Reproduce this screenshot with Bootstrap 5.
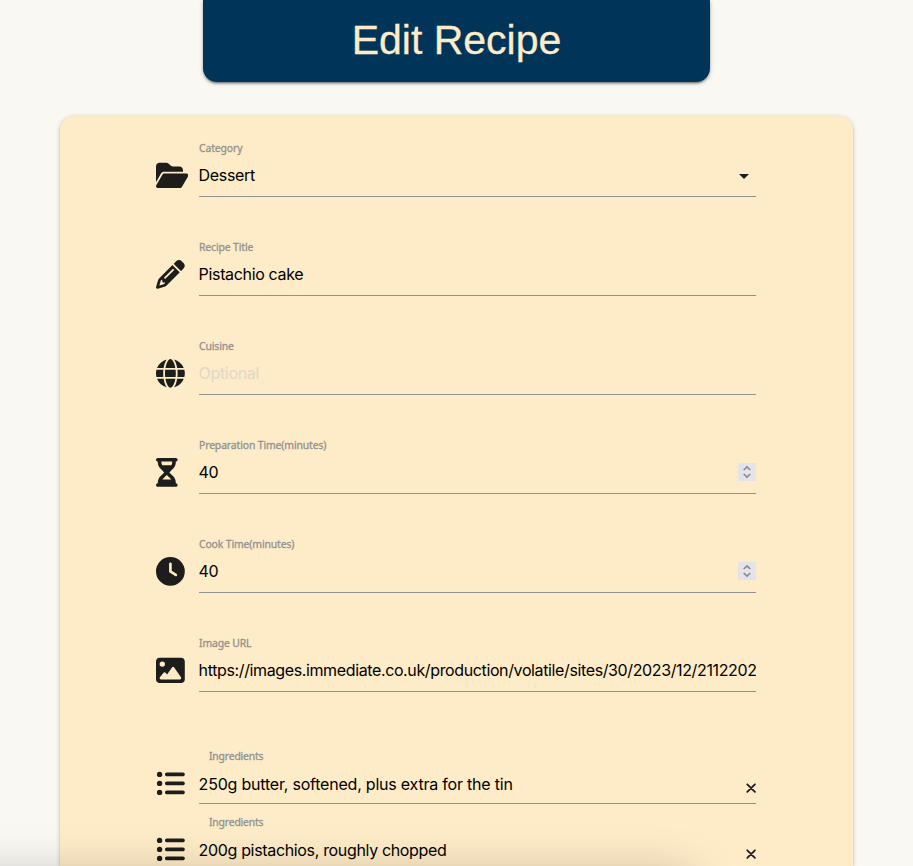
<!DOCTYPE html>
<html lang="en">
<head>
<meta charset="utf-8">
<meta name="viewport" content="width=device-width, initial-scale=1">
<title>Edit Recipe</title>
<link href="https://cdn.jsdelivr.net/npm/bootstrap@5.3.0/dist/css/bootstrap.min.css" rel="stylesheet">
<style>
  html, body { height: 100%; overflow: hidden; }
  body { background: #f9f8f3; color: #000; font-family: Inter, "Liberation Sans", sans-serif; }
  .page-title { width: 507px; height: 82px; margin-left: 203px; background: #003559; color: #feebc7; border-radius: 0 0 14px 14px;
    box-shadow: 0 2px 2px rgba(0,0,0,.24), 0 3px 1px -2px rgba(0,0,0,.2), 0 1px 5px rgba(0,0,0,.2); }
  .page-title h1 { font: 400 41px/1 "Liberation Sans", sans-serif; padding-bottom: 1px; -webkit-text-stroke: .3px #feebc7; }
  .recipe-form { width: 793px; height: 750px; margin: 34px 0 0 60px; padding: 24px 97px 0 96px; background: #feebc7; border-radius: 14px 14px 0 0;
    box-shadow: 0 2px 2px rgba(0,0,0,.14), 0 3px 1px -2px rgba(0,0,0,.12), 0 1px 5px rgba(0,0,0,.2); }
  .field { margin-bottom: 42px; }
  .field-label { display: block; height: 16px; line-height: 16px; margin-left: 43px; font-family: "Noto Sans", sans-serif; font-size: 10.4px; letter-spacing: -.12px; color: #929292; -webkit-text-stroke: .3px #929292; white-space: nowrap; }
  .icon-cell { width: 43px; height: 41px; padding-bottom: 2px; flex: none; }
  .icon-cell svg { height: 28.8px; fill: #1d1d1b; display: block; }
  .line { height: 41px; min-width: 0; border-bottom: 1px solid #929292; padding-bottom: 3px; }
  .line input, .line select { border: 0; background: transparent; outline: 0; padding: 0; height: 36px; width: 100%; min-width: 0; color: #000; font-size: 16px; letter-spacing: -.34px; text-indent: -.4px; appearance: none; }
  .line input::placeholder { color: #e0d8c6; opacity: 1; }
  .line #image { letter-spacing: -.375px; }
  .line #ing1 { letter-spacing: -.21px; }
  .line svg { flex: none; }
  .stepper { width: 18px; height: 18px; background: #e4e4e8; }
  .ingredient { margin-bottom: 10px; }
  .ingredient .field-label { margin-left: 53px; letter-spacing: -.18px; }
  .ingredient .icon-cell, .ingredient .line { height: 40px; }
  .ingredient .icon-cell { padding: 0 0 1px 0; }
  .ingredient .line { padding-bottom: 0; }
  .ingredients { margin-top: 56px; }
  .hint-dot { position: absolute; left: 43px; top: 65px; width: 2px; height: 2px; background: #ebeaf0; }
  .bottom-shade { position: fixed; left: -60px; width: 745px; top: 882px; height: 60px; box-shadow: 0 0 50px 4px rgba(0,0,0,.26); pointer-events: none; }
</style>
</head>
<body>
<header class="page-title d-flex align-items-center justify-content-center"><h1 class="m-0">Edit Recipe</h1></header>
<form class="recipe-form">
  <div class="field position-relative">
    <label class="field-label" for="category">Category</label>
    <div class="d-flex">
      <div class="icon-cell d-flex align-items-center"><svg viewBox="0 0 576 512"><path d="M88.7 223.8L0 375.8V96C0 60.7 28.7 32 64 32H181.5c17 0 33.3 6.7 45.3 18.7l26.5 26.5c12 12 28.3 18.7 45.3 18.7H416c35.3 0 64 28.7 64 64v32H144c-22.8 0-43.8 12.1-55.3 31.8zm27.6 16.1C122.1 230 132.6 224 144 224H544c11.5 0 22 6.1 27.7 16.1s5.7 22.2-.1 32.1l-112 192C453.9 474 443.4 480 432 480H32c-11.5 0-22-6.1-27.7-16.1s-5.7-22.2 .1-32.1l112-192z"/></svg></div>
      <div class="line d-flex align-items-center flex-fill"><select id="category"><option>Dessert</option></select><svg class="me-1" width="16" height="24" viewBox="0 0 24 36"><path d="M4.500 16.500l7.500 7.500 7.500-7.500z" fill="#1d1d1b"/></svg></div>
    </div>
    <span class="hint-dot"></span>
  </div>
  <div class="field">
    <label class="field-label" for="title">Recipe Title</label>
    <div class="d-flex">
      <div class="icon-cell d-flex align-items-center"><svg viewBox="0 0 512 512"><path d="M410.3 231l11.3-11.3-33.9-33.9-62.1-62.1L291.7 89.800l-11.3 11.3-22.6 22.6L58.600 322.900c-10.4 10.4-18 23.3-22.2 37.4L1 480.700c-2.5 8.4-.2 17.5 6.1 23.7s15.3 8.500 23.7 6.100l120.3-35.400c14.100-4.200 27-11.800 37.400-22.200L387.700 253.700 410.300 231zM160 399.400l-9.100 22.700c-4 3.100-8.500 5.400-13.300 6.900L59.400 452l23-78.100c1.400-4.900 3.800-9.400 6.900-13.300l22.700-9.100v32c0 8.800 7.200 16 16 16h32zM362.700 18.700L348.300 33.200 325.700 55.800 314.300 67.100l33.900 33.900 62.100 62.100 33.900 33.900 11.300-11.300 22.600-22.600 14.500-14.500c25-25 25-65.500 0-90.500L453.300 18.700c-25-25-65.500-25-90.500 0zm-47.400 168l-144 144c-6.200 6.200-16.400 6.200-22.600 0s-6.200-16.400 0-22.600l144-144c6.200-6.200 16.400-6.200 22.600 0s6.200 16.400 0 22.600z"/></svg></div>
      <div class="line d-flex align-items-center flex-fill"><input id="title" type="text" value="Pistachio cake"></div>
    </div>
  </div>
  <div class="field">
    <label class="field-label" for="cuisine">Cuisine</label>
    <div class="d-flex">
      <div class="icon-cell d-flex align-items-center"><svg viewBox="0 0 512 512"><path d="M352 256c0 22.200-1.200 43.600-3.300 64H163.300c-2.200-20.400-3.300-41.800-3.300-64s1.200-43.600 3.300-64H348.700c2.200 20.400 3.300 41.800 3.300 64zm28.800-64H503.900c5.300 20.500 8.100 41.900 8.100 64s-2.800 43.500-8.100 64H380.800c2.100-20.600 3.200-42 3.200-64s-1.100-43.400-3.200-64zm112.600-32H376.700c-10-63.900-29.800-117.400-55.300-151.600c78.300 20.700 142 77.500 171.900 151.600zm-149.100 0H167.700c6.100-36.400 15.500-68.600 27-94.700c10.500-23.600 22.200-40.700 33.500-51.500C239.400 3.200 248.700 0 256 0s16.600 3.200 27.800 13.800c11.300 10.800 23 27.900 33.500 51.500c11.600 26 20.900 58.200 27 94.700zm-209 0H18.600C48.600 85.900 112.200 29.100 190.600 8.400C165.100 42.600 145.300 96.100 135.300 160zM8.100 192H131.200c-2.100 20.600-3.200 42-3.200 64s1.100 43.400 3.200 64H8.100C2.800 299.500 0 278.100 0 256s2.800-43.500 8.100-64zM194.700 446.600c-11.600-26-20.900-58.200-27-94.600H344.300c-6.100 36.400-15.500 68.600-27 94.600c-10.500 23.600-22.200 40.700-33.500 51.500C272.600 508.800 263.300 512 256 512s-16.600-3.200-27.800-13.800c-11.300-10.800-23-27.900-33.500-51.500zM135.300 352c10 63.900 29.800 117.400 55.300 151.600C112.200 482.900 48.600 426.100 18.600 352H135.300zm358.100 0c-30 74.100-93.600 130.900-171.900 151.600c25.500-34.200 45.200-87.700 55.300-151.600H493.400z"/></svg></div>
      <div class="line d-flex align-items-center flex-fill"><input id="cuisine" type="text" placeholder="Optional"></div>
    </div>
  </div>
  <div class="field">
    <label class="field-label" for="prep">Preparation Time(minutes)</label>
    <div class="d-flex">
      <div class="icon-cell d-flex align-items-center"><svg viewBox="0 0 384 512"><path d="M32 0C14.300 0 0 14.300 0 32S14.300 64 32 64V75c0 42.400 16.900 83.100 46.900 113.100L146.700 256 78.900 323.900C48.900 353.900 32 394.600 32 437v11c-17.700 0-32 14.300-32 32s14.300 32 32 32H352c17.700 0 32-14.300 32-32s-14.300-32-32-32V437c0-42.400-16.900-83.100-46.900-113.100L237.300 256l67.900-67.900c30-30 46.900-70.700 46.900-113.100V64c17.700 0 32-14.300 32-32s-14.300-32-32-32H32zM96 75V64H288V75c0 19-5.600 37.400-16 53H112c-10.300-15.600-16-34-16-53zm16 309c3.500-5.300 7.600-10.300 12.100-14.900L192 301.300l67.900 67.900c4.600 4.600 8.600 9.600 12.100 14.900H112z"/></svg></div>
      <div class="line d-flex align-items-center flex-fill"><input id="prep" type="text" inputmode="numeric" value="40"><svg class="stepper" viewBox="0 0 18 18"><path d="M5.700 7L9 3.900 12.300 7M5.700 11L9 14.100 12.300 11" fill="none" stroke="#8a8a96" stroke-width="1.700"/></svg></div>
    </div>
  </div>
  <div class="field">
    <label class="field-label" for="cook">Cook Time(minutes)</label>
    <div class="d-flex">
      <div class="icon-cell d-flex align-items-center"><svg viewBox="0 0 512 512"><path d="M256 0a256 256 0 1 1 0 512A256 256 0 1 1 256 0zM232 120V256c0 8 4 15.500 10.700 20l96 64c11 7.400 25.900 4.400 33.300-6.700s4.400-25.900-6.700-33.300L280 243.200V120c0-13.300-10.700-24-24-24s-24 10.700-24 24z"/></svg></div>
      <div class="line d-flex align-items-center flex-fill"><input id="cook" type="text" inputmode="numeric" value="40"><svg class="stepper" viewBox="0 0 18 18"><path d="M5.700 7L9 3.900 12.300 7M5.700 11L9 14.100 12.300 11" fill="none" stroke="#8a8a96" stroke-width="1.700"/></svg></div>
    </div>
  </div>
  <div class="field mb-0">
    <label class="field-label" for="image">Image URL</label>
    <div class="d-flex">
      <div class="icon-cell d-flex align-items-center"><svg viewBox="0 0 512 512"><path d="M0 96C0 60.700 28.700 32 64 32H448c35.300 0 64 28.700 64 64V416c0 35.300-28.700 64-64 64H64c-35.300 0-64-28.700-64-64V96zM323.800 202.500c-4.500-6.600-11.900-10.500-19.800-10.500s-15.400 3.900-19.800 10.500l-87 127.600L170.700 297c-4.600-5.700-11.500-9-18.700-9s-14.200 3.300-18.700 9l-64 80c-5.800 7.200-6.900 17.100-2.900 25.400s12.400 13.600 21.600 13.600H424c8.900 0 17.100-4.900 21.200-12.800s3.600-17.400-1.400-24.700l-120-176zM112 192a48 48 0 1 0 0-96 48 48 0 1 0 0 96z"/></svg></div>
      <div class="line d-flex align-items-center flex-fill"><input id="image" type="text" value="https://images.immediate.co.uk/production/volatile/sites/30/2023/12/2112202"></div>
    </div>
  </div>
  <div class="ingredients">
    <div class="ingredient">
      <label class="field-label" for="ing1">Ingredients</label>
      <div class="d-flex">
        <div class="icon-cell d-flex align-items-center"><svg viewBox="0 0 512 512"><path d="M64 144a48 48 0 1 0 0-96 48 48 0 1 0 0 96zM192 64c-17.700 0-32 14.300-32 32s14.300 32 32 32H480c17.700 0 32-14.300 32-32s-14.300-32-32-32H192zm0 160c-17.700 0-32 14.300-32 32s14.300 32 32 32H480c17.700 0 32-14.300 32-32s-14.300-32-32-32H192zm0 160c-17.700 0-32 14.300-32 32s14.300 32 32 32H480c17.700 0 32-14.300 32-32s-14.300-32-32-32H192zM64 464a48 48 0 1 0 0-96 48 48 0 1 0 0 96zm48-208a48 48 0 1 0-96 0 48 48 0 1 0 96 0z"/></svg></div>
        <div class="line d-flex align-items-center flex-fill"><input id="ing1" type="text" value="250g butter, softened, plus extra for the tin"><svg class="mt-2" width="10" height="10" viewBox="0 0 10 10"><path d="M1.300 1.300l7.600 7.600M8.900 1.300L1.300 8.900" stroke="#1d1d1b" stroke-width="1.800" stroke-linecap="round"/></svg></div>
      </div>
    </div>
    <div class="ingredient mb-0">
      <label class="field-label" for="ing2">Ingredients</label>
      <div class="d-flex">
        <div class="icon-cell d-flex align-items-center"><svg viewBox="0 0 512 512"><path d="M64 144a48 48 0 1 0 0-96 48 48 0 1 0 0 96zM192 64c-17.700 0-32 14.300-32 32s14.300 32 32 32H480c17.700 0 32-14.300 32-32s-14.300-32-32-32H192zm0 160c-17.700 0-32 14.300-32 32s14.300 32 32 32H480c17.700 0 32-14.300 32-32s-14.300-32-32-32H192zm0 160c-17.700 0-32 14.300-32 32s14.300 32 32 32H480c17.700 0 32-14.300 32-32s-14.300-32-32-32H192zM64 464a48 48 0 1 0 0-96 48 48 0 1 0 0 96zm48-208a48 48 0 1 0-96 0 48 48 0 1 0 96 0z"/></svg></div>
        <div class="line d-flex align-items-center flex-fill"><input id="ing2" type="text" value="200g pistachios, roughly chopped"><svg class="mt-2" width="10" height="10" viewBox="0 0 10 10"><path d="M1.300 1.300l7.600 7.600M8.900 1.300L1.300 8.900" stroke="#1d1d1b" stroke-width="1.800" stroke-linecap="round"/></svg></div>
      </div>
    </div>
  </div>
</form>
<div class="bottom-shade"></div>
<script src="https://cdn.jsdelivr.net/npm/bootstrap@5.3.0/dist/js/bootstrap.bundle.min.js"></script>
</body>
</html>
